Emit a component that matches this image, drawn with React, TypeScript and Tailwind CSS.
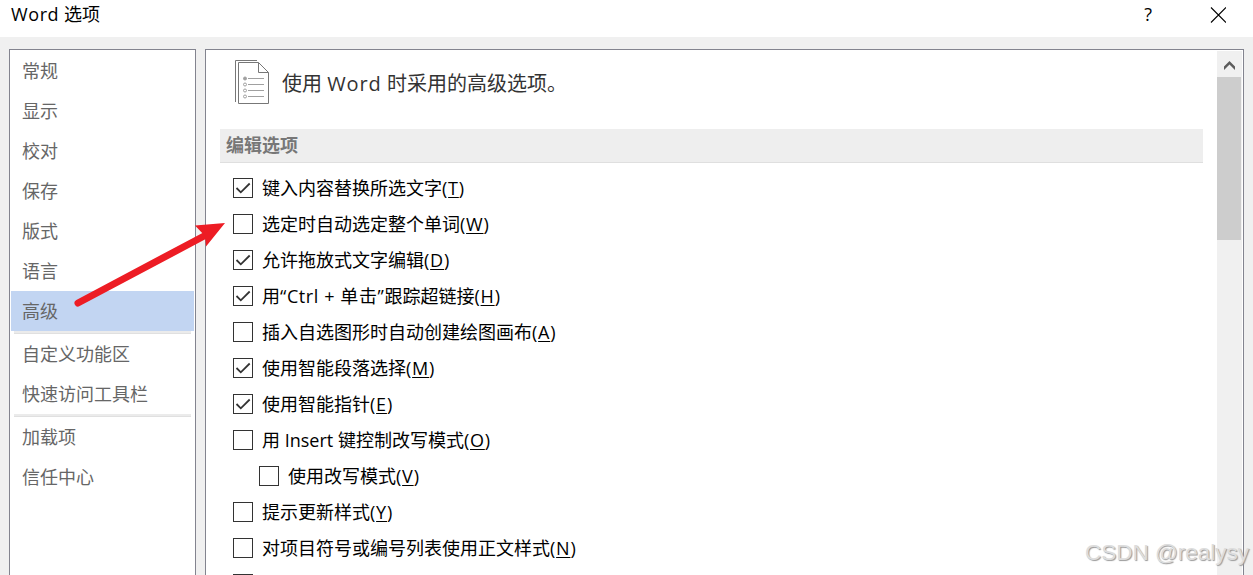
import clsx from "clsx";

const categories = [
  ["常规", "显示", "校对", "保存", "版式", "语言", "高级"],
  ["自定义功能区", "快速访问工具栏"],
  ["加载项", "信任中心"],
];

const options = [
  { label: "键入内容替换所选文字", hotkey: "T", checked: true },
  { label: "选定时自动选定整个单词", hotkey: "W" },
  { label: "允许拖放式文字编辑", hotkey: "D", checked: true },
  {
    label: (
      <>
        用<span className="tracking-[0.6px]">“Ctrl + 单击”</span>跟踪超链接
      </>
    ),
    hotkey: "H",
    checked: true,
  },
  { label: "插入自选图形时自动创建绘图画布", hotkey: "A" },
  { label: "使用智能段落选择", hotkey: "M", checked: true },
  { label: "使用智能指针", hotkey: "E", checked: true },
  { label: "用 Insert 键控制改写模式", hotkey: "O" },
  { label: "使用改写模式", hotkey: "V", nested: true },
  { label: "提示更新样式", hotkey: "Y" },
  { label: "对项目符号或编号列表使用正文样式", hotkey: "N" },
  { label: "", hotkey: "" },
];

function TitleBar() {
  return (
    <header className="flex h-[37px] shrink-0 items-start bg-white pl-[11px] text-black">
      <h1 className="text-[18px] leading-[29px]">
        <span className="tracking-[0.6px]">Word</span> 选项
      </h1>
      <span className="mr-[58px] ml-auto text-[18px] leading-[29px]">?</span>
      <svg className="mt-[7px] mr-[27px] size-4" viewBox="0 0 16 16" fill="none" stroke="#000" strokeWidth="1.1">
        <path d="M1 .5l15 15M16 .5l-15 15" />
      </svg>
    </header>
  );
}

function Sidebar() {
  return (
    <nav className="w-[187px] shrink-0 border border-b-0 border-[#83848f] bg-white px-px pt-px">
      {categories.map((group, i) => (
        <div key={group[0]}>
          {i > 0 && <div className="mr-[3px] ml-[3px] h-[3px] border-b border-[#e0e0e0] bg-[#ebebeb]" />}
          {group.map((name) => (
            <div
              key={name}
              className={clsx(
                "h-10 pl-[11px] text-[18px] leading-[41px] text-[#666]",
                name === "高级" && "bg-[#c2d5f2]"
              )}
            >
              {name}
            </div>
          ))}
        </div>
      ))}
    </nav>
  );
}

function PageIcon() {
  return (
    <svg className="h-11 w-[34px]" viewBox="0 0 34 44" fill="none" stroke="#777">
      <path d="M.5 42V.5H22" />
      <path d="M3.5 2.5h20l10 10v31h-30z" />
      <path d="M23.5 2.5v10h10" />
      <g stroke="#a0a0a0">
        <circle cx="10" cy="18.5" r="1.5" fill="#a0a0a0" />
        <circle cx="10" cy="24.5" r="1.5" />
        <circle cx="10" cy="30.5" r="1.5" />
        <circle cx="10" cy="36.5" r="1.5" />
        <path d="M13 18.5h16M13 24.5h16M13 30.5h16M13 36.5h16" />
      </g>
    </svg>
  );
}

function Checkbox({ checked }: { checked?: boolean }) {
  return (
    <span className="size-5 shrink-0 border border-[#333] bg-white">
      {checked && (
        <svg className="size-[18px]" viewBox="0 0 18 18" fill="none" stroke="#333" strokeWidth="1.8">
          <path d="M2.500 9l4.300 4.300L15.700 4.500" />
        </svg>
      )}
    </span>
  );
}

function Scrollbar() {
  return (
    <div className="mt-px mr-px w-[25px] shrink-0 bg-[#f0f0f0]">
      <div className="flex h-[26px] items-center pl-[7px]">
        <svg className="mt-[3px] h-[9px] w-[11px]" viewBox="0 0 11 9" fill="#5c5c5c">
          <path d="M5.500 0L11 5.500V9L5.500 3.500L0 9V5.500z" />
        </svg>
      </div>
      <div className="h-[163px] w-6 bg-[#cdcdcd]" />
    </div>
  );
}

function Panel() {
  return (
    <main className="flex w-[1039px] border border-b-0 border-[#83848f] bg-white">
      <div className="flex-1 pr-[14px] pl-[14px]">
        <div className="flex h-[54px] items-start pt-[10px] pl-[15px]">
          <PageIcon />
          <h2 className="ml-[13px] text-[20px] leading-[48px] text-[#333]">
            使用 <span className="tracking-[0.9px]">Word</span> 时采用的高级选项。
          </h2>
        </div>
        <h3 className="mt-[25px] h-[34px] border-b border-[#dfdfdf] bg-[#eee] pl-[6px] text-[18px] leading-[33px] font-bold text-[#777]">
          编辑选项
        </h3>
        <ul className="mt-[7px] pl-[13px]">
          {options.map(({ label, hotkey, checked, nested }) => (
            <li key={hotkey} className={clsx("flex h-9 items-center gap-[9px] text-black", nested && "pl-[26px]")}>
              <Checkbox checked={checked} />
              {label && (
                <span className="text-[18px] leading-9">
                  {label}
                  <span className="tracking-[0.8px]">
                    (<span className="underline decoration-1 underline-offset-2">{hotkey}</span>)
                  </span>
                </span>
              )}
            </li>
          ))}
        </ul>
      </div>
      <Scrollbar />
    </main>
  );
}

export default function App() {
  return (
    <div className="relative flex h-[575px] w-[1253px] flex-col overflow-hidden bg-[#f0f0f0] font-['Open_Sans','Noto_Sans_CJK_SC',sans-serif] whitespace-nowrap">
      <TitleBar />
      <div className="mt-3 flex h-[526px] shrink-0 gap-[9px] pl-[9px]">
        <Sidebar />
        <Panel />
      </div>
      {/* Arrow from the selected category to the option */}
      <svg className="absolute top-[210px] left-[70px] h-[105px] w-[165px]" viewBox="70 210 165 105">
        <path d="M78 303L206 235" stroke="#ed1c24" strokeWidth="7" strokeLinecap="round" />
        <path d="M225 223L206 246.500L205 236L195 225.500z" fill="#ed1c24" />
      </svg>
      <div className="absolute top-[537px] left-[1085px] font-['Liberation_Sans',sans-serif] text-[22.5px] leading-8 text-[#ddd] [text-shadow:1px_1px_1px_#999]">
        CSDN @realysy
      </div>
    </div>
  );
}
